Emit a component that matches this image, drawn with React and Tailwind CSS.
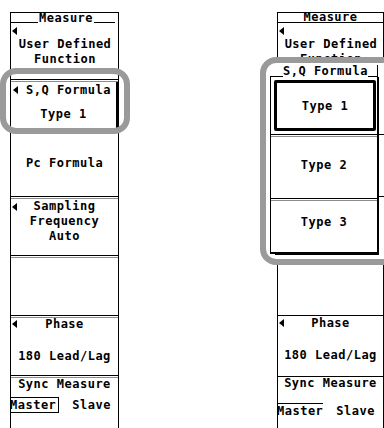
import React from 'react';

const Arrow = ({ className = '' }) => (
    <svg width="5" height="8" viewBox="0 0 5 8" className={`shrink-0 ${className}`}>
        <polygon points="5,0 0,4 5,8" fill="#000" />
    </svg>
);

// double rule between soft keys: dark line over a grey one
const Sep = () => <div className="h-[3px] border-t border-black border-b border-b-[#8c8c8c]" />;

const LeftPanel = () => (
    <div className="w-[109px] h-[416px] mt-[12px] ml-[10px] border-t border-x border-black flex flex-col">
        <div className="h-[10px] flex items-end">
            <div className="w-[27px] border-b border-black" />
            <span className="leading-[10px] px-[1px]">Measure</span>
            <div className="flex-1 border-b border-black mr-[3px]" />
        </div>

        <div className="h-[56px] flex flex-col pt-[4px] pl-[1px]">
            <Arrow />
            <div className="mt-[2px] text-center leading-[15px]">User Defined<br />Function</div>
        </div>
        <Sep />

        <div className="h-[51px] border-r-2 border-b-2 border-black flex flex-col">
            <div className="flex items-center pt-[1px] pl-[2px] leading-[14px]">
                <Arrow />
                <span className="ml-[8px]">S,Q Formula</span>
            </div>
            <div className="mt-[10px] text-center leading-[14px]">Type 1</div>
        </div>

        <div className="h-[63px] pt-[23px] text-center leading-[14px]">Pc Formula</div>
        <Sep />

        <div className="h-[56px] flex flex-col leading-[15px]">
            <div className="flex">
                <Arrow className="mt-[4px] ml-[1px]" />
                <div className="flex-1 text-center -ml-[6px]">Sampling</div>
            </div>
            <div className="text-center">Frequency</div>
            <div className="text-center">Auto</div>
        </div>
        <Sep />

        <div className="h-[57px]" />
        <Sep />

        <div className="h-[57px] flex flex-col leading-[12px]">
            <div className="flex">
                <Arrow className="mt-[2px] ml-[1px]" />
                <div className="flex-1 text-center -ml-[6px]">Phase</div>
            </div>
            <div className="mt-[19px] text-center leading-[14px]">180 Lead/Lag</div>
        </div>
        <Sep />

        <div className="flex-1 flex flex-col">
            <div className="text-center leading-[12px]">Sync Measure</div>
            <div className="mt-[7px] flex items-center leading-[14px]">
                <span className="-ml-[1px] border border-black border-l-0 pr-[2px]">Master</span>
                <span className="ml-[13px]">Slave</span>
            </div>
        </div>
    </div>
);

const RightPanel = () => (
    <div className="w-[107px] h-[416px] mt-[12px] ml-[158px] border-t border-x border-black flex flex-col">
        <div className="h-[10px] border-b border-black text-center leading-[9px]">Measure</div>

        <div className="h-[293px] border-b border-black flex flex-col pt-[4px] pl-[1px]">
            <Arrow />
            <div className="mt-[2px] text-center leading-[15px]">User Defined<br />Function</div>
        </div>

        <div className="h-[61px] border-b border-black flex flex-col leading-[12px]">
            <div className="flex pt-[1px]">
                <Arrow className="mt-[2px] ml-[1px]" />
                <div className="flex-1 text-center -ml-[6px]">Phase</div>
            </div>
            <div className="mt-[19px] text-center leading-[14px]">180 Lead/Lag</div>
        </div>

        <div className="flex-1 flex flex-col">
            <div className="text-center leading-[12px]">Sync Measure</div>
            <div className="mt-[14px] flex leading-[14px]">
                <span className="-ml-[1px] border-t border-black">Master</span>
                <span className="ml-[13px] pt-[1px]">Slave</span>
            </div>
        </div>
    </div>
);

// S,Q Formula selection menu that pops over the right panel
const FormulaMenu = () => (
    <div className="absolute left-[260px] top-[57px] w-[140px] h-[208px] border-[6px] border-[#9a9a9a] rounded-[16px] bg-white flex pl-[4px]">
        <div className="w-[109px] flex flex-col">
            <div className="h-[14px] flex items-end">
                <div className="w-[13px] border-b border-black" />
                <span className="leading-[12px]">S,Q Formula</span>
                <div className="flex-1 h-[12px] border-b border-r border-black mr-[1px]" />
            </div>
            <div className="border-l border-r-2 border-black flex flex-col">
                <div className="h-[57px] pt-[3px] pl-[3px] pr-[1px]">
                    <div className="h-[51px] border-[3px] border-black rounded-[2px] flex items-center justify-center">Type 1</div>
                </div>
                <Sep />
                <div className="h-[61px] pt-[21px] text-center leading-[14px]">Type 2</div>
                <Sep />
                <div className="h-[53px] pt-[14px] text-center leading-[14px] border-b-2 border-black">Type 3</div>
            </div>
            <div className="ml-[5px] border-b border-black" />
        </div>
        <div className="flex-1 flex flex-col">
            <div className="h-[71px]" />
            <div className="h-[62px] border-t border-black" />
            <div className="border-t border-black" />
        </div>
    </div>
);

export default function App() {
    return (
        <div className="relative w-[384px] h-[428px] overflow-hidden bg-white text-black font-bold text-[12px] tracking-[0.5px] font-['DejaVu_Sans_Mono','Liberation_Mono',monospace]">
            <div className="flex">
                <LeftPanel />
                <RightPanel />
            </div>
            {/* highlight frame around the active soft key */}
            <div className="absolute left-0 top-[68px] w-[130px] h-[66px] border-[6px] border-[#9a9a9a] rounded-[16px] pointer-events-none" />
            <FormulaMenu />
        </div>
    );
}
